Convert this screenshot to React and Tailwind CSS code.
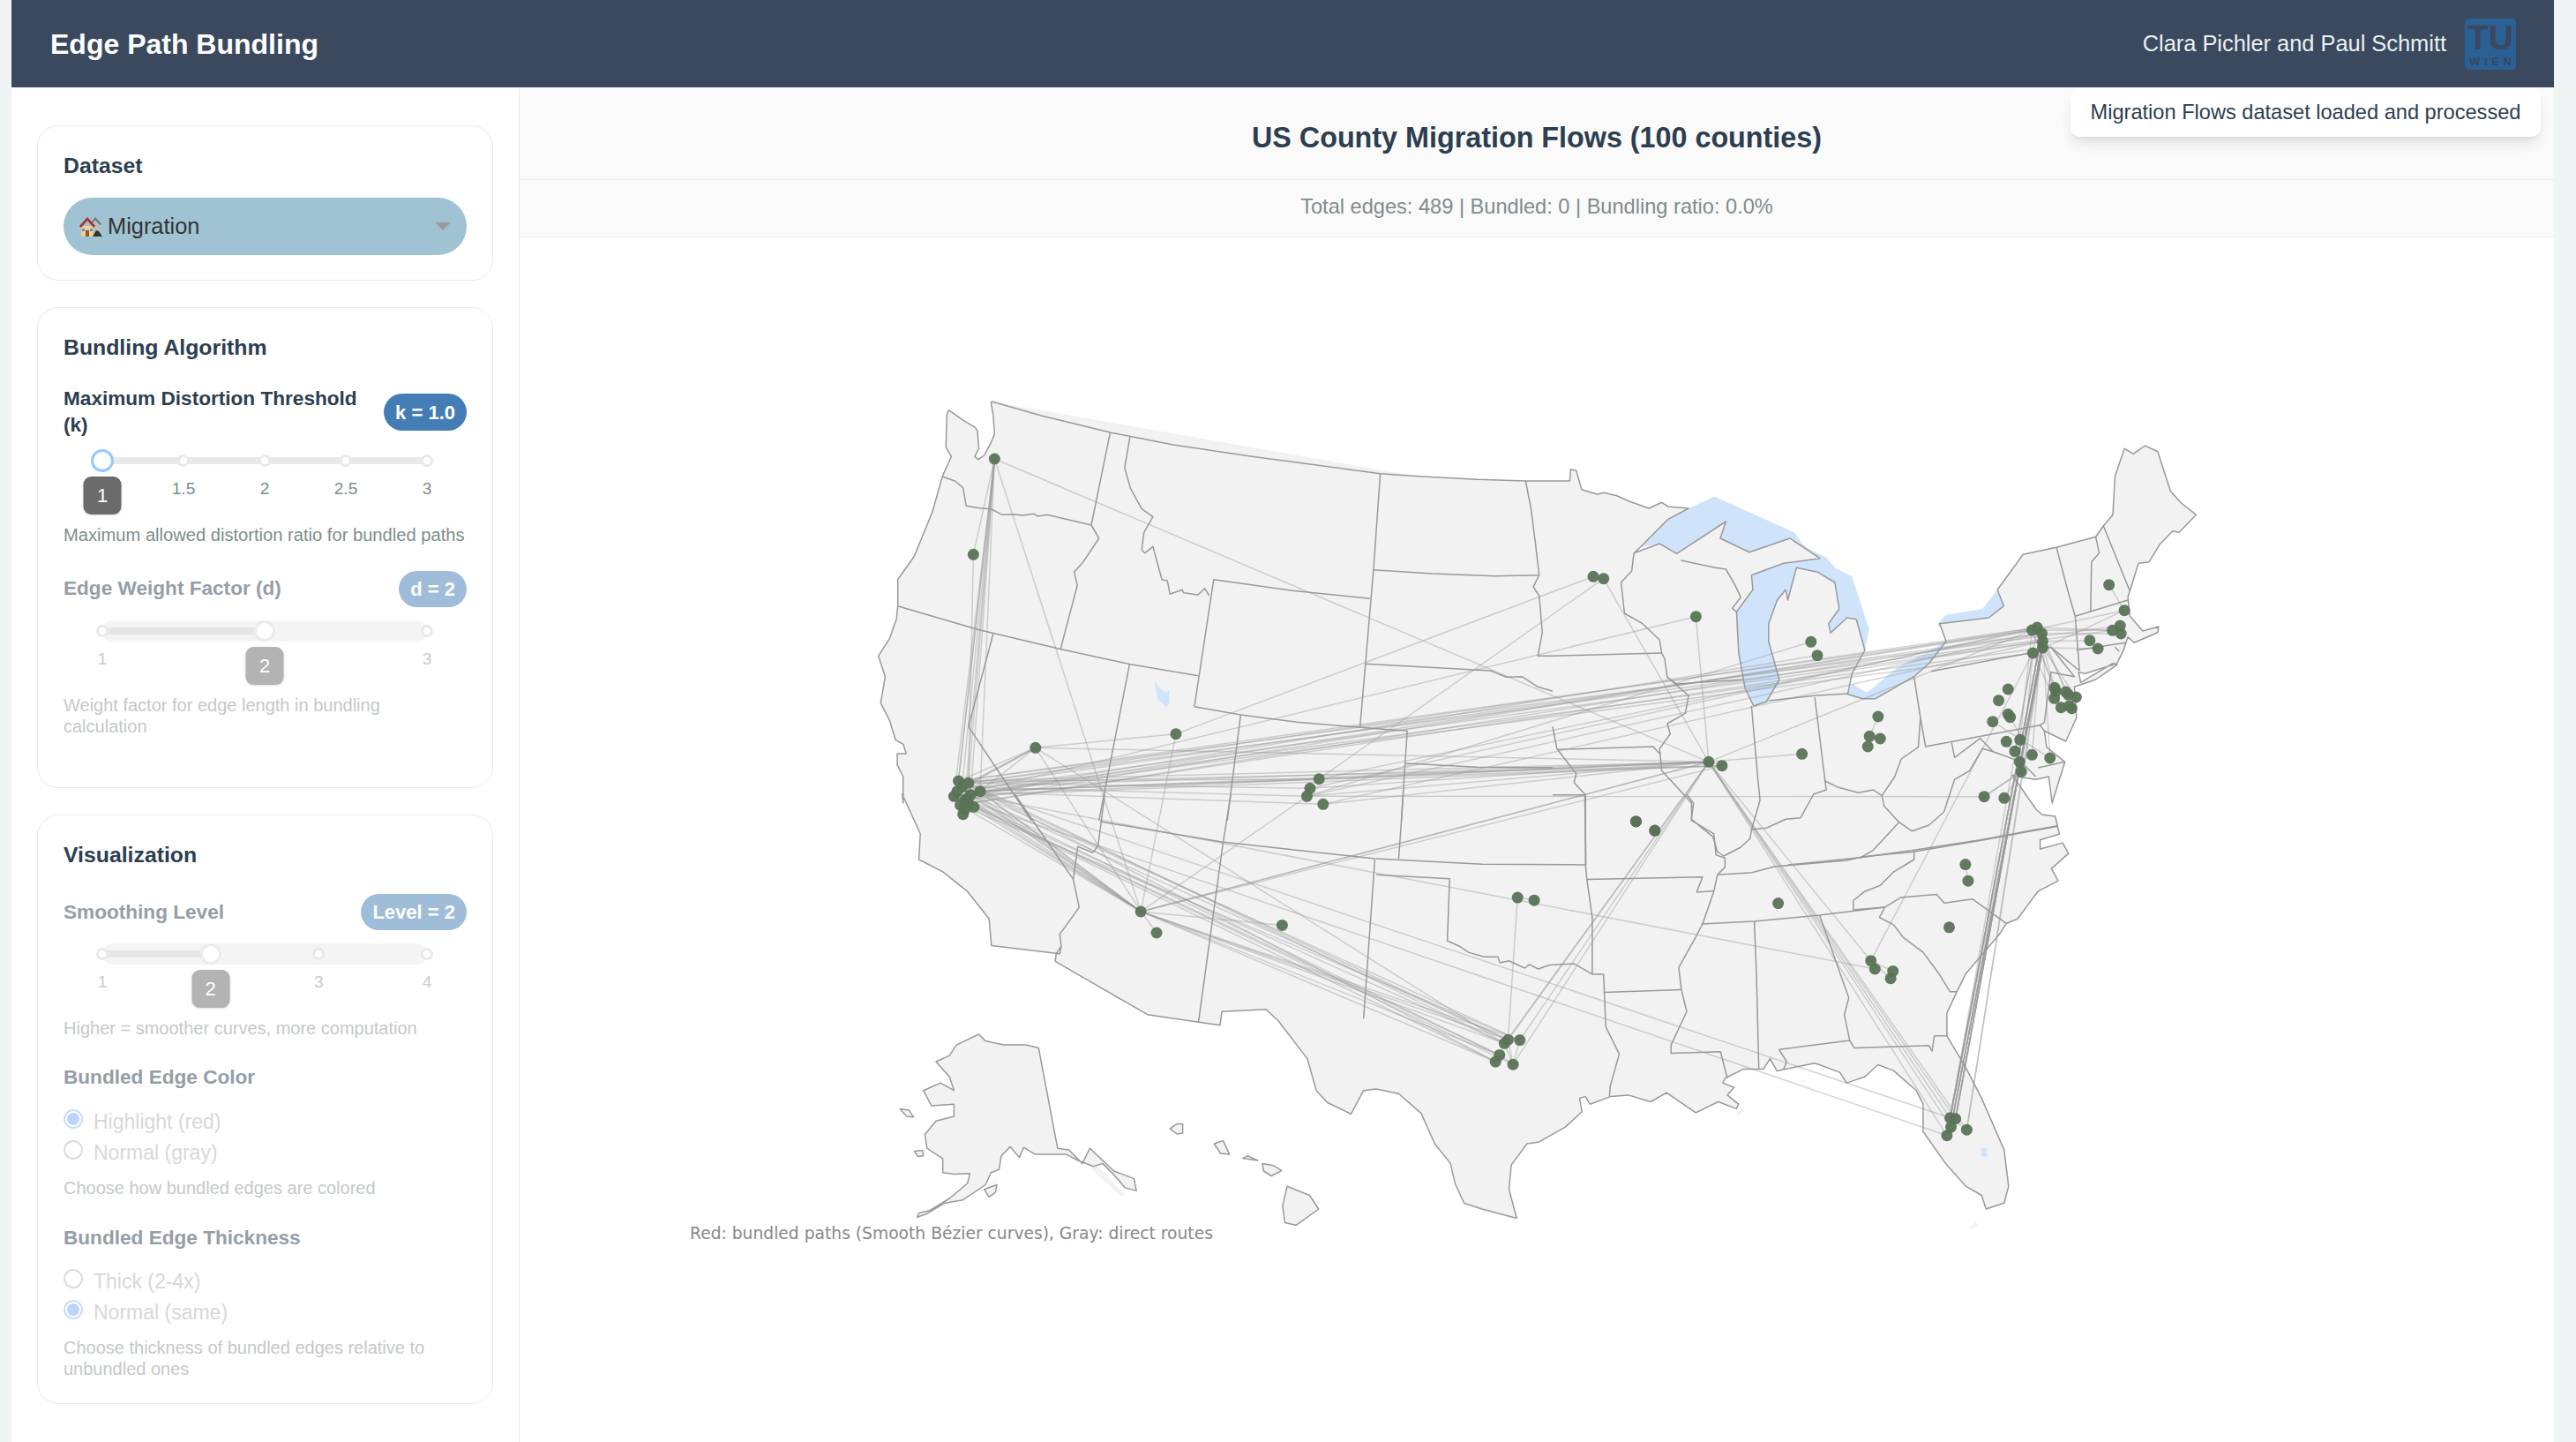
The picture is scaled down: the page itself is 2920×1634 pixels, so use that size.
import React from 'react';

// traced map coordinates come from crops of the picture, each with its own scale
const crop = (x0, y0, sx, sy) => (s) =>
    s.trim().split(/\s+/).map((p) => {
        const [x, y] = p.split(',').map(Number);
        return [x0 + x / sx, y0 + y / sy];
    });
const c5 = crop(960, 430, 1.96, 3);
const c6 = crop(1760, 480, 2.063, 3);
const c7 = crop(760, 900, 1.96, 2.904);
const c8 = crop(1560, 900, 1.96, 2.904);
const d = (pts, close) => 'M' + pts.map((p) => p[0].toFixed(1) + ' ' + p[1].toFixed(1)).join('L') + (close ? 'Z' : '');

const landOutline = [
    ...c5('226,104 262,142 285,163 290,175 293,235 284,262 292,272 305,258 320,215 328,185 325,120 320,78 322,75 430,122 585,180 725,222 900,262 1185,320 1280,330 1400,340 1510,345'),
    ...c6('0,195 40,195 42,155 55,160 68,225 105,240 120,235 150,245 180,265 225,288 255,268 270,282 318,288 270,325 205,420 190,440 250,408 290,442 405,333 392,390 460,437 555,390 625,458 540,475 465,515 468,565 430,640 435,780 450,900 470,960 500,945 530,870 505,740 505,680 525,600 545,565 550,600 570,490 620,505 660,540 670,630 645,680 650,712 688,660 710,665 730,770 700,850 690,920 725,935 755,935 845,860 880,815 920,740 905,680 1020,660 1055,620 1040,565 1100,445 1180,420 1270,385 1288,348 1310,310 1315,180 1337,85 1358,103 1385,75 1415,95 1445,230 1470,270 1505,310 1465,370 1450,365 1420,410 1395,470 1370,475 1345,590 1350,655 1380,705 1417,690 1415,710 1360,745 1345,725 1335,770 1320,815 1245,850 1230,845 1235,880 1310,815 1320,820 1270,870 1220,895 1225,1000 1200,1080 1150,1045 1155,1100 1198,1150 1185,1210 1168,1290 1160,1200 1130,1210 1085,1200 1075,1195 1130,1310 1145,1330 1175,1335 1185,1395'),
    ...c8('1475,150 1475,180 1525,160 1538,195 1500,245 1515,285 1470,320 1425,410 1400,425 1385,460 1310,590 1290,650 1268,720 1268,795 1310,900 1345,1000 1395,1170 1405,1290 1395,1345 1355,1365 1345,1320 1310,1290 1265,1215 1215,1110 1215,1020 1200,975 1150,910 1115,890 1085,930 1045,950 1030,915 975,885 890,910 875,870 860,905 815,905 775,935 770,950 795,965 780,990 805,1020 800,1035 760,1012 710,1048 645,982 610,1012 560,990 520,995 475,1020 465,995 452,1000 457,1045 420,1095 360,1145 335,1150 300,1220 295,1300 312,1395 235,1365 195,1345 175,1280 165,1215 130,1150 100,1050 50,985 0,970'),
    ...c7('1540,975 1512,1052 1460,1015 1435,975 1415,870 1350,745 1323,708 1225,715 1221,760 1060,725 855,550 857,525 868,500 865,525 713,498 708,410 660,320 605,255 552,215 555,130 515,0'),
    ...c5('125,1440 125,1350 112,1310 112,1272 132,1272 125,1240 108,1225 95,1160 75,1100 85,1010 70,940 95,880 110,815 113,770 113,680 150,600 190,450 212,330 232,262 220,230 222,120'),
];

const alaska = [
    c7('685,790 700,812 740,825 790,825 818,835 860,1165 885,1170 915,1215 932,1165 985,1240 1030,1265 1035,1305 1010,1295 990,1260 960,1215 940,1225 905,1205 880,1185 810,1185 785,1162 775,1195 755,1160 735,1190 730,1235 712,1245 700,1285 650,1335 610,1345 570,1380 548,1392 552,1378 575,1370 620,1330 660,1280 665,1248 630,1250 605,1245 605,1200 570,1165 565,1120 590,1075 630,1060 630,1020 580,1025 562,975 600,950 630,975 620,930 590,880 620,860 635,825'),
    c7('510,1035 530,1040 540,1062 525,1060 515,1045'),
    c7('542,1175 560,1172 562,1190 550,1192'),
    c7('697,1300 725,1285 722,1310 708,1325'),
    c7('1110,1100 1125,1085 1138,1085 1138,1115 1125,1118'),
    c7('1208,1150 1228,1140 1242,1185 1222,1182'),
    c7('1272,1198 1282,1190 1305,1205'),
    c7('1315,1215 1340,1222 1358,1238 1335,1256 1318,1240'),
    c7('1370,1290 1420,1320 1440,1365 1390,1418 1365,1410 1360,1355'),
];

const water = [
    c6('318,288 378,248 565,370 585,410 625,458 555,390 460,437 392,390 405,333 290,442 250,408 205,420 270,325'),
    c6('585,415 640,455 660,490 700,520 740,700 730,770 710,665 688,660 650,712 645,680 670,630 660,540 620,505 570,490 550,600 545,565 525,600 505,680 505,740 530,870 500,945 470,960 450,900 435,780 430,640 468,565 465,515 540,475 625,458'),
    c6('700,885 735,915 805,830 885,770 915,745 880,815 845,860 755,935 725,935 690,920'),
    c6('900,680 920,650 1005,630 1040,565 1055,620 1020,660 915,680 905,695'),
    c5('684,1025 695,1050 710,1065 716,1055 717,1100 710,1115 690,1085'),
    c8('1345,1165 1357,1165 1357,1192 1345,1192'),
];

const faintLand = [
    c5('322,75 1250,325 1185,320 900,262 725,222 585,180 430,122'),
    c8('800,1050 815,1035 818,1042 805,1058'),
    c8('1318,1428 1332,1408 1337,1416 1322,1434'),
    c7('932,1230 950,1225 1012,1320 1000,1322'),
    c7('700,1290 728,1262 722,1275 705,1300'),
];

const borders = [
    c5('212,330 240,345 258,368 265,430 295,437 320,440 345,460 370,458 390,462 415,457 425,465 445,460 543,495'),
    c5('585,180 543,495 560,540 525,620 505,655 512,700 475,915'),
    c5('629,195 617,300 630,370 655,440 680,467 660,520 655,580 662,590 680,568 690,625 700,680 712,685 718,730 745,715 748,725 780,732 795,710 805,735'),
    c5('113,770 290,850 470,915 630,968 780,1007'),
    c5('325,865 270,1180 410,1500'),
    c5('628,968 560,1500'),
    c5('772,1112 815,680 990,718 1162,745'),
    c5('772,1112 875,1140 1000,1165 1140,1183 1245,1195 1240,1305 1232,1500'),
    c5('875,1140 845,1500'),
    c5('1185,320 1170,647 1152,967 1140,1183'),
    c5('1170,647 1300,660 1440,668 1538,665'),
    c5('1152,967 1430,990 1465,1012 1500,1010 1535,1045 1568,1060'),
    c5('1508,345 1520,440 1530,560 1538,665 1525,705 1538,735 1545,860 1535,940 1568,940'),
    c5('1240,1305 1400,1318 1568,1320'),
    c7('965,0 950,170 938,192 905,172 895,280 908,372 880,430 865,460 868,500'),
    c7('765,0 895,280'),
    c7('955,90 1225,157 1565,212 1540,738'),
    c7('1228,158 1173,750'),
    c7('1245,0 1228,158'),
    c8('0,212 235,230 465,232 465,0'),
    c8('60,0 50,212'),
    c8('0,265 163,278 158,482 185,500 205,520 240,535 270,535 275,555 295,548 330,572 340,560 360,575 385,562 440,558 480,592 505,592 510,765 540,855 520,960 518,995'),
    c8('465,232 468,280 480,405 480,590'),
    c8('468,280 725,272 712,322 750,318'),
    c8('505,652 678,643'),
    c8('678,643 690,715 655,825 655,852 765,847 780,935'),
    c8('758,265 835,258 885,238 1045,218 1085,205 1190,190 1350,150 1515,105'),
    c8('722,427 840,418 985,398 1130,372'),
    c8('690,0 705,30 700,85 750,130 755,200 775,210 775,240 758,265 750,320 725,427 710,470 672,570 678,643'),
    c8('840,418 845,600 850,905'),
    c8('985,398 1050,670 1040,725 1052,810'),
    c8('895,840 1052,810 1062,835 1228,827 1235,845 1240,795 1268,795'),
    c8('895,840 912,880 905,905'),
    c8('1130,372 1060,380 1060,350 1085,320 1120,300 1150,255 1195,215 1195,190'),
    c8('1130,372 1165,340 1245,330 1262,358 1325,345 1400,425'),
    c8('1130,372 1118,405 1150,430 1170,470 1215,520 1250,590 1275,650 1290,650'),
    c6('190,440 185,500 160,540 168,645 210,680 250,735 255,780 262,800 268,862 318,925 310,985 268,1020 275,1055 250,1105 255,1180 300,1250 325,1290 325,1345 375,1405 385,1455 400,1470 440,1440 462,1410 465,1380'),
    c6('0,790 255,780'),
    c6('268,862 290,885 445,870'),
    c6('300,465 380,490 405,495 425,545 440,590 420,628 430,640'),
    c6('10,1108 235,1098 252,1125'),
    c6('0,1030 10,1105 55,1190 50,1220 75,1260 78,1500'),
    c6('0,1262 78,1262'),
    c6('465,960 480,1210 485,1280 465,1380 500,1375 545,1345 580,1340 610,1260 640,1245 637,1215 665,1235 715,1255 750,1245 770,1265 775,1300 810,1355 840,1385 880,1365 915,1320 940,1210 975,1180 1005,1105 1030,1115 1000,1070 940,1135 933,1085'),
    c6('505,942 613,925 690,918'),
    c6('613,930 637,1215'),
    c6('770,1265 800,1200 815,1140 855,1100 860,1000 845,860'),
    c6('860,1000 872,1098 1140,1025'),
    c6('885,842 1115,780 1165,760 1232,840'),
    c6('1178,420 1205,570 1222,655 1232,840'),
    c6('1270,385 1278,440 1260,470 1258,640'),
    c6('1288,348 1350,570'),
    c6('1222,655 1345,600'),
    c6('1225,770 1340,745'),
    c6('1315,760 1325,775'),
    c6('1165,760 1220,860 1165,845 1150,1015 1140,1025 1150,1045'),
    c6('1130,1200 1095,1150 1030,1115'),
    c6('1135,1170 1198,1150'),
    c6('810,1355 750,1450 720,1475'),
    c6('550,1500 720,1475 845,1450 1000,1415 1180,1367'),
];

const ca = c5('248,1365 270,1372 256,1385 245,1400 296,1400 238,1417 275,1412 262,1430 252,1447 270,1440 282,1453 262,1462 258,1478 268,1425');
const [sea, pdx, slc, reno] = c5('328,270 281,595 731,1205 419,1252');
const den = c5('1049,1358 1029,1390 1022,1417 1058,1444');
const [phx, tuc, abq] = c7('1045,386 1080,456 1359,431');
const mn = c6('95,520 119,527');
const [mad, det1, det2, chi, chi2, ind] = c6('335,656 604,742 619,788 365,1150 396,1163 583,1123');
const col = c6('761,996 741,1063 766,1071 737,1098');
const kc = c6('195,1352 239,1383');
const ny = c6('1121,702 1133,693 1144,713 1146,740 1146,762 1123,780');
const ne = c6('1301,548 1337,635 1327,687 1309,703 1329,714 1256,737 1275,765');
const nj = c6('1174,898 1177,910 1200,912 1206,922 1224,930 1173,934 1189,965 1208,960 1214,968');
const pa = c6('1065,903 1043,941 1065,988 1070,998 1029,1013 1061,1081 1093,1075 1081,1114 1121,1126 1163,1137 1092,1150 1096,1183 1009,1268 1056,1273');
const ark = c8('577,90 619,120');
const ok = c8('314,340 351,349');
const [tn, nc1, nc2, sc] = c8('893,359 1309,231 1315,285 1273,438');
const atl = c8('1099,548 1108,575 1148,582 1143,606');
const tx = c8('293,808 285,820 319,809 274,858 265,880 304,889');
const fl = c8('1275,1065 1287,1068 1277,1095 1312,1104 1268,1123');

const edges = [];
const link = (from, to, n) => {
    for (let i = 0; i < n; i++) edges.push([from[i % from.length], to[i % to.length]]);
};
link([sea], ca.slice(0, 10), 8);
link([sea], [pdx, phx, chi], 3);
link([pdx], [ca[1]], 1);
link(ca, ny, 10);
link(ca, ne.slice(2), 2);
link(ca, [chi, chi2], 7);
link(ca, den, 5);
link(ca, [reno], 5);
link(ca, tx, 11);
link(ca, [phx], 9);
link(ca.slice(4, 7), [fl[0], fl[4]], 2);
link([ca[6]], [atl[1]], 1);
link([ca[5]], [mad, det2], 2);
link(den, ny, 4);
link(den, [chi], 4);
link([den[2]], [pa[12]], 1);
link([reno], [slc, chi, phx, tx[1]], 4);
link([det1], [den[2]], 1);
link([slc], [mn[0], phx], 2);
link([den[0]], [mn[1]], 1);
link([phx], tx, 5);
link([phx], [abq, tuc, den[2]], 3);
link([phx], [chi, chi2], 3);
link([tx[2], tx[0], tx[5], tx[1]], [chi], 4);
link([ok[0]], [tx[0], ok[1]], 2);
link([chi], fl, 5);
link([chi], [atl[0], ny[0], ind, mad, mn[1], chi2], 6);
link([atl[0]], [ny[5], atl[1]], 2);
link(atl.slice(1), [atl[0]], 3);
link(fl.slice(0, 3), ny.slice(2, 5), 18);
link([fl[4]], [ny[4], ny[5]], 2);
link([fl[3]], [ny[3], ny[4]], 2);
link(fl.slice(1), [fl[0]], 4);
link(ny, [ne[1], ne[3], ne[4], ne[5], ne[6]], 7);
link([ne[0]], [ne[1]], 1);
link(ny, nj, 7);
link(ny, pa.slice(6, 12), 6);
link([pa[2]], [pa[8]], 1);
link([pa[4]], [pa[9]], 1);
link(pa.slice(12), [pa[11]], 3);
link(pa.slice(5, 9), [pa[10]], 4);
link([col[0]], [col[1]], 1);
link([nc1], [nc2], 1);
link(tx, [tx[5]], 4);

const nodes = [...ca, sea, pdx, slc, reno, ...den, phx, tuc, abq, ...mn, mad, det1, det2, chi, chi2, ind, ...col, ...kc, ...ny, ...ne, ...nj, ...pa, ...ark, ...ok, tn, nc1, nc2, sc, ...atl, ...tx, ...fl];

function MigrationMap() {
    return (
        <svg viewBox="589 269 2306 1365" className="block w-full flex-1 min-h-0">
            {faintLand.map((pts, i) => (
                <path key={i} d={d(pts, true)} fill="#f2f2f2" />
            ))}
            {water.map((pts, i) => (
                <path key={i} d={d(pts, true)} fill="#cfe3fb" />
            ))}
            <path d={d(landOutline, true)} fill="#f2f2f2" stroke="#999" strokeWidth="1.5" strokeLinejoin="round" />
            {alaska.map((pts, i) => (
                <path key={i} d={d(pts, true)} fill="#f2f2f2" stroke="#999" strokeWidth="1.5" strokeLinejoin="round" />
            ))}
            {water.slice(4).map((pts, i) => (
                <path key={i} d={d(pts, true)} fill="#cfe3fb" />
            ))}
            {borders.map((pts, i) => (
                <path key={i} d={d(pts)} fill="none" stroke="#999" strokeWidth="1.5" strokeLinejoin="round" />
            ))}
            {edges.map(([a, b], i) => (
                <line key={i} x1={a[0]} y1={a[1]} x2={b[0]} y2={b[1]} stroke="#999" strokeOpacity="0.42" strokeWidth="1.5" />
            ))}
            {nodes.map((n, i) => (
                <circle key={i} cx={n[0]} cy={n[1]} r="6.5" fill="#5a7356" fillOpacity="0.95" />
            ))}
            <text x="782" y="1404" fontFamily="'DejaVu Sans', sans-serif" fontSize="18.7" fill="#888">
                Red: bundled paths (Smooth Bézier curves), Gray: direct routes
            </text>
        </svg>
    );
}

function HousesIcon() {
    return (
        <svg viewBox="0 0 26 25" className="w-[26px] h-[25px] shrink-0">
            <path d="M14 9l4-6 6 6v12h-6z" fill="#b9bcc2" />
            <path d="M13 9l5-7 7 8-2 1-5-6-4 5z" fill="#6d727c" />
            <path d="M2 12h14v12H2z" fill="#f3cf95" />
            <path d="M0 12L9 2l9 10-2 2-7-8-7 8z" fill="#a8322c" />
            <path d="M7 17h4v7H7z" fill="#8a5a34" />
            <path d="M3 15h3v3H3zM12 15h3v3h-3z" fill="#5f93c7" />
            <path d="M15 24l4-7 3 1 4 6z" fill="#333" />
        </svg>
    );
}

function TuLogo() {
    return (
        <svg viewBox="0 0 58 58" className="w-[58px] h-[58px] shrink-0">
            <rect width="58" height="58" rx="5" fill="#2a6093" />
            <text x="3" y="35" textLength="52" lengthAdjust="spacingAndGlyphs" fontFamily="'Liberation Sans', sans-serif" fontWeight="700" fontSize="39" fill="#3a475c">
                TU
            </text>
            <text x="5" y="53" textLength="48" fontFamily="'Liberation Sans', sans-serif" fontWeight="700" fontSize="13" fill="#3a475c">
                WIEN
            </text>
        </svg>
    );
}

function Slider({ marks, value, disabled }) {
    const pos = (i) => (i / (marks.length - 1)) * 368;
    const active = marks.indexOf(value);
    return (
        <div className="relative h-[85px] w-[368px] ml-[44px]">
            {disabled ? (
                <div className="absolute left-0 right-0 top-0 h-[24px] mt-px rounded-full bg-[#f4f4f4]" />
            ) : (
                <div className="absolute left-0 right-0 top-[9px] h-[8px] bg-[#e9e9e9]" />
            )}
            {disabled && <div className="absolute left-0 top-[9px] h-[8px] bg-[#e6e6e6]" style={{ width: pos(active) }} />}
            {marks.map((m, i) =>
                m === value ? (
                    <React.Fragment key={m}>
                        <span
                            className={
                                'absolute top-[13px] -translate-x-1/2 -translate-y-1/2 rounded-full bg-white ' +
                                (disabled ? 'w-[24px] h-[24px] border-[3px] border-[#ececec]' : 'w-[26px] h-[26px] border-[3px] border-[#91caff]')
                            }
                            style={{ left: pos(i) }}
                        />
                        <span
                            className={
                                'absolute top-[31px] -translate-x-1/2 w-[43px] h-[43px] rounded-[9px] flex items-center justify-center text-white text-[22px] shadow-sm ' +
                                (disabled ? 'bg-[#b3b3b3]' : 'bg-[#6b6b6b]')
                            }
                            style={{ left: pos(i) }}
                        >
                            {m}
                        </span>
                    </React.Fragment>
                ) : (
                    <React.Fragment key={m}>
                        <span
                            className="absolute top-[13px] -translate-x-1/2 -translate-y-1/2 w-[14px] h-[14px] rounded-full bg-white border-[3px] border-[#e9e9e9]"
                            style={{ left: pos(i) }}
                        />
                        <span
                            className={'absolute top-[32px] h-[26px] leading-[26px] -translate-x-1/2 text-[19.2px] ' + (disabled ? 'text-[#c6cbcd]' : 'text-[#7f8c8d]')}
                            style={{ left: pos(i) }}
                        >
                            {m}
                        </span>
                    </React.Fragment>
                )
            )}
        </div>
    );
}

function Badge({ children, disabled, className }) {
    return (
        <span
            className={
                'shrink-0 h-[41px] px-[13px] rounded-full flex items-center text-white font-bold text-[22px] ' +
                (disabled ? 'bg-[#9fbcd8] ' : 'bg-[#447db5] ') +
                (className || '')
            }
        >
            {children}
        </span>
    );
}

function Radio({ label, checked }) {
    return (
        <div className="flex items-center gap-[12px] h-[35px]">
            <span
                className={
                    'w-[22px] h-[22px] mb-[8px] rounded-full border-2 flex items-center justify-center shrink-0 ' +
                    (checked ? 'border-[#c9dcff]' : 'border-[#dcdcdc]')
                }
            >
                {checked && <span className="w-[14px] h-[14px] rounded-full bg-[#bcd3fb]" />}
            </span>
            <span className="text-[23px] text-[#d5d8db]">{label}</span>
        </div>
    );
}

function Card({ title, children }) {
    return (
        <div className="bg-white border border-[#e6ecef] rounded-[24px] px-[29px] pt-[29px]">
            <h3 className="h-[31px] leading-[31px] text-[24.8px] font-bold text-[#2c3e50]">{title}</h3>
            {children}
        </div>
    );
}

function Sidebar() {
    return (
        <aside className="w-[576px] shrink-0 bg-white border-r border-[#e9eced] px-[29px] pt-[43px] flex flex-col gap-[30px]">
            <Card title="Dataset">
                <div className="mt-[21px] mb-[28px] h-[65px] rounded-full bg-[#9fc3d2] flex items-center pl-[18px] pr-[18px] text-[25.4px] text-[#333]">
                    <HousesIcon />
                    <span className="ml-[6px] flex-1">Migration</span>
                    <span className="w-0 h-0 border-x-[9px] border-x-transparent border-t-[9px] border-t-[#9a9a9a]" />
                </div>
            </Card>

            <Card title="Bundling Algorithm">
                <div className="mt-[28px] h-[60px] flex items-center justify-between">
                    <span className="w-[345px] text-[22.6px] leading-[30px] font-bold text-[#2c3e50]">Maximum Distortion Threshold (k)</span>
                    <Badge className="h-[42px]">k = 1.0</Badge>
                </div>
                <div className="mt-[12px]">
                    <Slider marks={[1, 1.5, 2, 2.5, 3]} value={1} />
                </div>
                <p className="text-[20.15px] leading-[24px] text-[#7f8c8d]">Maximum allowed distortion ratio for bundled paths</p>

                <div className="mt-[29px] h-[40px] flex items-center justify-between">
                    <span className="text-[22.6px] font-bold text-[#959ea7]">Edge Weight Factor (d)</span>
                    <Badge disabled className="h-[40px]">d = 2</Badge>
                </div>
                <div className="mt-[15px]">
                    <Slider marks={[1, 2, 3]} value={2} disabled />
                </div>
                <p className="w-[400px] text-[20px] leading-[24px] text-[#c4c8cb] pb-[57px]">Weight factor for edge length in bundling calculation</p>
            </Card>

            <Card title="Visualization">
                <div className="mt-[29px] h-[41px] flex items-center justify-between">
                    <span className="text-[22.6px] font-bold text-[#959ea7]">Smoothing Level</span>
                    <Badge disabled>Level = 2</Badge>
                </div>
                <div className="mt-[14px]">
                    <Slider marks={[1, 2, 3, 4]} value={2} disabled />
                </div>
                <p className="text-[20px] leading-[24px] text-[#c4c8cb]">Higher = smoother curves, more computation</p>

                <div className="mt-[29px] h-[30px] leading-[30px] text-[22.6px] font-bold text-[#959ea7]">Bundled Edge Color</div>
                <div className="mt-[18px]">
                    <Radio label="Highlight (red)" checked />
                    <Radio label="Normal (gray)" />
                </div>
                <p className="mt-[10px] text-[20px] leading-[24px] text-[#c4c8cb]">Choose how bundled edges are colored</p>

                <div className="mt-[30px] h-[30px] leading-[30px] text-[22.6px] font-bold text-[#959ea7]">Bundled Edge Thickness</div>
                <div className="mt-[17px]">
                    <Radio label="Thick (2-4x)" />
                    <Radio label="Normal (same)" checked />
                </div>
                <p className="mt-[10px] pb-[27px] text-[20px] leading-[24px] text-[#c4c8cb]">Choose thickness of bundled edges relative to unbundled ones</p>
            </Card>
        </aside>
    );
}

export default function App() {
    return (
        <div className="h-[1634px] overflow-hidden bg-[#f0f4f5] pl-[13px] pr-[25px] flex flex-col font-['Liberation_Sans',sans-serif]">
            <header className="h-[99px] shrink-0 bg-[#3a495e] flex items-center justify-between pl-[44px] pr-[43px]">
                <h1 className="text-[32px] font-bold text-white">Edge Path Bundling</h1>
                <div className="flex items-center gap-[21px]">
                    <span className="text-[25.4px] text-[#ecf0f1]">Clara Pichler and Paul Schmitt</span>
                    <TuLogo />
                </div>
            </header>

            <div className="flex-1 min-h-0 flex">
                <Sidebar />
                <main className="relative flex-1 min-w-0 bg-white flex flex-col">
                    <div className="h-[105px] shrink-0 bg-[#fafafa] border-b border-[#e9eced] flex items-center justify-center pt-[10px]">
                        <h2 className="text-[32.3px] font-bold text-[#2c3e50]">US County Migration Flows (100 counties)</h2>
                    </div>
                    <div className="h-[65px] shrink-0 bg-[#fafafa] border-b border-[#e9eced] flex items-center justify-center pb-[2px] text-[23.6px] text-[#7f8c8d]">
                        Total edges: 489 | Bundled: 0 | Bundling ratio: 0.0%
                    </div>
                    <MigrationMap />
                    <div className="absolute top-0 right-[15px] w-[533px] h-[56px] pt-px bg-white rounded-[10px] shadow-lg flex items-center justify-center text-[23.6px] text-[#2c3e50]">
                        Migration Flows dataset loaded and processed
                    </div>
                </main>
            </div>
        </div>
    );
}
